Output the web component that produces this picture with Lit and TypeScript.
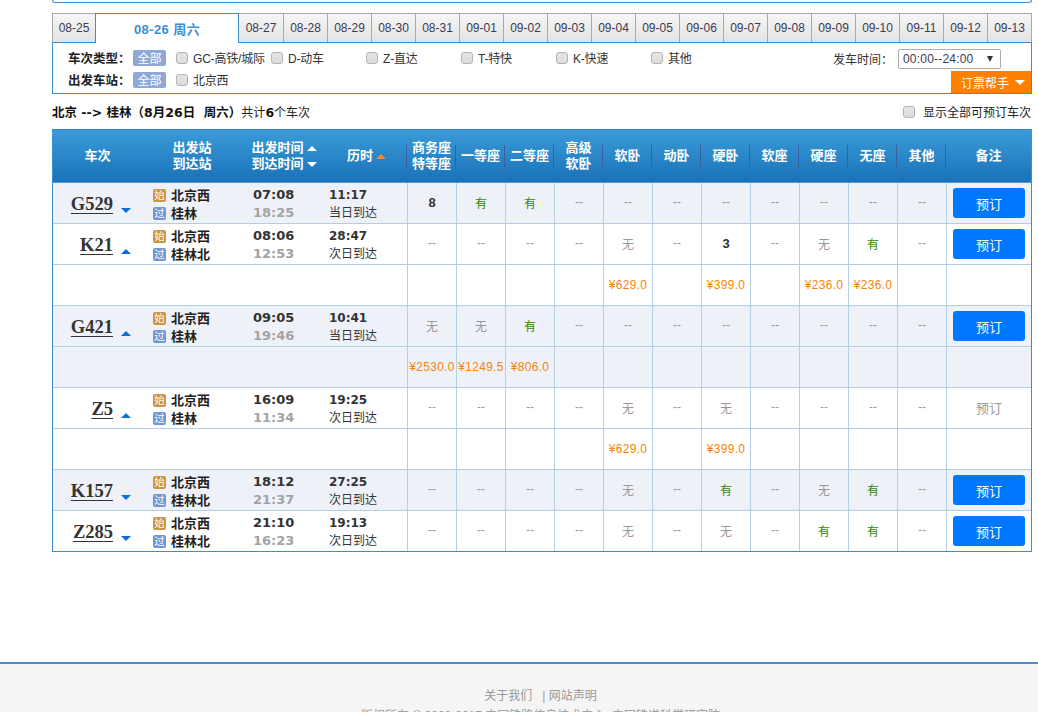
import { LitElement, html, css, svg } from "lit";
import { customElement } from "lit/decorators.js";

type Train = {
  no: string; open: boolean; from: string; to: string; dep: string; arr: string; dur: string; day: string;
  seats: string[]; prices?: Record<number, string>; tint: boolean; book: boolean;
};
const D = "--";
const trains: Train[] = [
  { no: "G529", open: false, from: "北京西", to: "桂林", dep: "07:08", arr: "18:25", dur: "11:17", day: "当日到达", tint: true, book: true,
    seats: ["8", "有", "有", D, D, D, D, D, D, D, D] },
  { no: "K21", open: true, from: "北京西", to: "桂林北", dep: "08:06", arr: "12:53", dur: "28:47", day: "次日到达", tint: false, book: true,
    seats: [D, D, D, D, "无", D, "3", D, "无", "有", D], prices: { 4: "¥629.0", 6: "¥399.0", 8: "¥236.0", 9: "¥236.0" } },
  { no: "G421", open: true, from: "北京西", to: "桂林", dep: "09:05", arr: "19:46", dur: "10:41", day: "当日到达", tint: true, book: true,
    seats: ["无", "无", "有", D, D, D, D, D, D, D, D], prices: { 0: "¥2530.0", 1: "¥1249.5", 2: "¥806.0" } },
  { no: "Z5", open: true, from: "北京西", to: "桂林", dep: "16:09", arr: "11:34", dur: "19:25", day: "次日到达", tint: false, book: false,
    seats: [D, D, D, D, "无", D, "无", D, D, D, D], prices: { 4: "¥629.0", 6: "¥399.0" } },
  { no: "K157", open: false, from: "北京西", to: "桂林北", dep: "18:12", arr: "21:37", dur: "27:25", day: "次日到达", tint: true, book: true,
    seats: [D, D, D, D, "无", D, "有", D, "无", "有", D] },
  { no: "Z285", open: false, from: "北京西", to: "桂林北", dep: "21:10", arr: "16:23", dur: "19:13", day: "次日到达", tint: false, book: true,
    seats: [D, D, D, D, "无", D, "无", D, "有", "有", D] },
];
const dates = ["08-25", "08-26 周六", "08-27", "08-28", "08-29", "08-30", "08-31", "09-01", "09-02", "09-03", "09-04", "09-05", "09-06", "09-07", "09-08", "09-09", "09-10", "09-11", "09-12", "09-13"];
const seatHeads = [["商务座", "特等座"], ["一等座"], ["二等座"], ["高级", "软卧"], ["软卧"], ["动卧"], ["硬卧"], ["软座"], ["硬座"], ["无座"], ["其他"]];
const types = ["GC-高铁/城际", "D-动车", "Z-直达", "T-特快", "K-快速", "其他"];

const tri = (up: boolean, color: string, w = 10, h = 5) => html`<svg class="tri" width=${w} height=${h} viewBox="0 0 10 5" preserveAspectRatio="none">${svg`<polygon points=${up ? "5,0 10,5 0,5" : "0,0 10,0 5,5"} fill=${color}></polygon>`}</svg>`;

@customElement("app-root")
export class AppRoot extends LitElement {
  static styles = css`
    :host { display: block; width: 1038px; height: 712px; overflow: hidden; background: #fff; color: #333;
      font-family: "Liberation Sans", "Noto Sans CJK SC", sans-serif; font-size: 12px; }
    * { box-sizing: border-box; }
    .main { width: 980px; margin-left: 52px; }
    .strip { height: 3px; border: 1px solid #3b8fd0; border-top: 0; border-radius: 0 0 4px 4px; margin-bottom: 10px; }
    .tabs { display: flex; height: 30px; position: relative; z-index: 1; }
    .tab { width: 44px; height: 29px; border: 1px solid #a9a9a9; border-right: 0; border-bottom: 0;
      background: linear-gradient(#f6f6f6, #e3e3e3); display: flex; align-items: center; justify-content: center; color: #3d3a55; }
    .tab:first-child { width: 43px; }
    .tab:last-child { width: 45px; border-right: 1px solid #a9a9a9; }
    .tab.on { width: 144px; height: 30px; background: #fff; border: 1px solid #3b8fd0; border-bottom: 0; color: #3b8fd0; font-weight: bold; font-size: 13px; letter-spacing: .4px; }
    .tab.on + .tab { border-left: 0; }
    .filter { height: 52px; margin-top: -1px; border: 1px solid #3b8fd0; padding: 6px 0 0 15px; position: relative; }
    .line { display: flex; align-items: center; height: 17px; margin-bottom: 5px; }
    .lbl { width: 65px; font-weight: bold; font-size: 12.5px; color: #222; white-space: nowrap; }
    .all { width: 33px; height: 16px; margin-right: 10px; background: #8ea9d6; color: #fff; border-radius: 2px; font-size: 12px;
      display: flex; align-items: center; justify-content: center; }
    .opt { width: 95px; display: flex; align-items: center; white-space: nowrap; color: #333; letter-spacing: -.2px; }
    .cb { appearance: none; -webkit-appearance: none; flex: none; margin: 0 5px 0 0; width: 12px; height: 12px; border: 1px solid #b4b4b4; border-radius: 3px; background: linear-gradient(#e4e4e4, #dcdcdc); }
    .timebox { position: absolute; left: 780px; top: 6px; display: flex; align-items: center; height: 20px; }
    .timelbl { width: 65px; color: #333; margin-bottom: 2px; }
    .select { width: 103px; height: 20px; border: 1px solid #aaa; border-radius: 2px; padding: 0 7px 0 4px; display: flex; align-items: center; justify-content: space-between; color: #3d3a55; letter-spacing: .2px; }
    .helper { position: absolute; right: 0; bottom: 0; width: 80px; height: 22px; background: #ff8000; color: #fff; font-size: 12px; display: flex; align-items: center; padding-left: 10px; gap: 6px; }
    .result { display: flex; justify-content: space-between; align-items: center; height: 35px; color: #222; }
    .result b { font: bold 12.5px "DejaVu Sans", "Noto Sans CJK SC", sans-serif; color: #111; }
    .right { display: flex; align-items: center; padding-right: 1px; }
    .right .cb { margin-right: 8px; }
    table { width: 980px; table-layout: fixed; border-collapse: separate; border-spacing: 0; border: 1px solid #3b8fd0; border-top: 0; }
    th { height: 54px; padding: 0; position: relative; color: #fff; font-size: 13px; line-height: 16px; font-weight: bold; text-align: center;
      background: linear-gradient(#3a9bd8, #1a72b8); border-top: 1px solid #3585c4; border-bottom: 1px solid #4b9ad2; }
    th::after { content: ""; position: absolute; right: 0; top: 15px; height: 24px; width: 1px; background: #3a5f9f; }
    th:nth-child(-n+3)::after { right: -1px; }
    th:last-child::after { display: none; }
    th .sort { display: inline-flex; align-items: center; gap: 3px; position: relative; left: 1px; }
    td { height: 41px; padding: 0; border-bottom: 1px solid #b0cfe2; text-align: center; vertical-align: middle; }
    tr:last-child td { border-bottom: 0; height: 40px; }
    tr.tint td { background: #eef1f8; }
    td.s { border-left: 1px solid #b4d0e2; color: #999; }
    td.s.v { padding-bottom: 2px; }
    td.s.yes { color: #2e8b00; }
    td.s.num { color: #333; font-weight: bold; font-size: 13px; }
    td.s.price { color: #fc8302; font-size: 12px; white-space: nowrap; letter-spacing: .3px; }
    .no { display: flex; align-items: center; justify-content: flex-end; padding: 2px 11px 0 0; }
    .no a { font: bold 18.5px "Liberation Serif", serif; color: #333; text-decoration: underline; text-underline-offset: 3px; }
    .no .tri { margin: 12px 0 0 8px; }
    .st, .tm, .du { display: flex; flex-direction: column; text-align: left; line-height: 18px; margin-top: 1px; }
    .st { padding: 2px 0 0 11px; font-weight: bold; font-size: 13px; color: #222; }
    .st div { display: flex; align-items: center; gap: 5px; }
    .bd { width: 13px; height: 13px; color: #fff; font-size: 10.5px; font-weight: normal; line-height: 13px; text-align: center; border-radius: 2px; }
    .bd.a { background: #cc9440; }
    .bd.b { background: #6f96d8; }
    .tm { padding-left: 11px; font: bold 13px/18px "DejaVu Sans", sans-serif; color: #333; }
    .tm span + span { color: #a3a3a3; }
    .du { padding-left: 5px; color: #333; }
    .du b { font: bold 12px/18px "DejaVu Sans", sans-serif; color: #333; }
    .btn { width: 72px; height: 30px; margin-left: 6px; background: #0077ff; color: #fff; border-radius: 3px; font-size: 13px; display: flex; align-items: center; justify-content: center; }
    .off { color: #999; font-size: 13px; }
    .footer { margin-top: 110px; height: 80px; border-top: 2px solid #4a90d0; background: #f5f5f5; color: #999; text-align: center; padding: 22px 0 0 43px; line-height: 20px; }
  `;

  private seat(v: string) {
    const c = v === "有" ? "yes" : /\d/.test(v) ? "num" : "";
    return html`<td class="s v ${c}">${v}</td>`;
  }

  render() {
    return html`
      <div class="main">
        <div class="strip"></div>
        <div class="tabs">${dates.map((d, i) => html`<div class="tab ${i === 1 ? "on" : ""}">${d}</div>`)}</div>
        <div class="filter">
          <div class="line">
            <span class="lbl">车次类型：</span><span class="all">全部</span>
            ${types.map(t => html`<label class="opt"><input class="cb" type="checkbox" />${t}</label>`)}
          </div>
          <div class="line">
            <span class="lbl">出发车站：</span><span class="all">全部</span>
            <label class="opt"><input class="cb" type="checkbox" />北京西</label>
          </div>
          <div class="timebox"><span class="timelbl">发车时间：</span>
            <div class="select"><span>00:00--24:00</span>${tri(false, "#333", 6, 6)}</div>
          </div>
          <div class="helper">订票帮手 ${tri(false, "#fff", 10, 5)}</div>
        </div>
        <div class="result">
          <span><b>北京 --&gt; 桂林（8月26日&nbsp; 周六）</b>共计<b>6</b>个车次</span>
          <label class="right"><input class="cb" type="checkbox" />显示全部可预订车次</label>
        </div>
        <table>
          <colgroup>
            <col style="width:89px" /><col style="width:100px" /><col style="width:82px" /><col style="width:83px" />
            ${seatHeads.map(() => html`<col style="width:49px" />`)}<col />
          </colgroup>
          <thead>
            <tr>
              <th>车次</th>
              <th>出发站<br />到达站</th>
              <th><span class="sort">出发时间 ${tri(true, "#fff")}</span><br /><span class="sort">到达时间 ${tri(false, "#fff")}</span></th>
              <th><span class="sort">历时 ${tri(true, "#f08a3c")}</span></th>
              ${seatHeads.map(h => html`<th>${h.map((l, i) => html`${i ? html`<br />` : ""}${l}`)}</th>`)}
              <th>备注</th>
            </tr>
          </thead>
          <tbody>
            ${trains.map(t => html`
              <tr class=${t.tint ? "tint" : ""}>
                <td><div class="no"><a>${t.no}</a>${tri(t.open, "#0a6fd8")}</div></td>
                <td><div class="st"><div><span class="bd a">始</span>${t.from}</div><div><span class="bd b">过</span>${t.to}</div></div></td>
                <td><div class="tm"><span>${t.dep}</span><span>${t.arr}</span></div></td>
                <td><div class="du"><b>${t.dur}</b><span>${t.day}</span></div></td>
                ${t.seats.map(s => this.seat(s))}
                <td class="s ${t.book ? "" : "v"}">${t.book ? html`<div class="btn">预订</div>` : html`<span class="off">预订</span>`}</td>
              </tr>
              ${t.prices ? html`<tr class=${t.tint ? "tint" : ""}>
                <td colspan="4"></td>
                ${t.seats.map((_, i) => html`<td class="s price">${t.prices![i] ?? ""}</td>`)}
                <td class="s"></td>
              </tr>` : ""}
            `)}
          </tbody>
        </table>
      </div>
      <div class="footer">
        <div>关于我们 &nbsp;&nbsp;| 网站声明</div>
        <div>版权所有 © 2008-2017 中国铁路信息技术中心 &nbsp;中国铁道科学研究院</div>
      </div>
    `;
  }
}
